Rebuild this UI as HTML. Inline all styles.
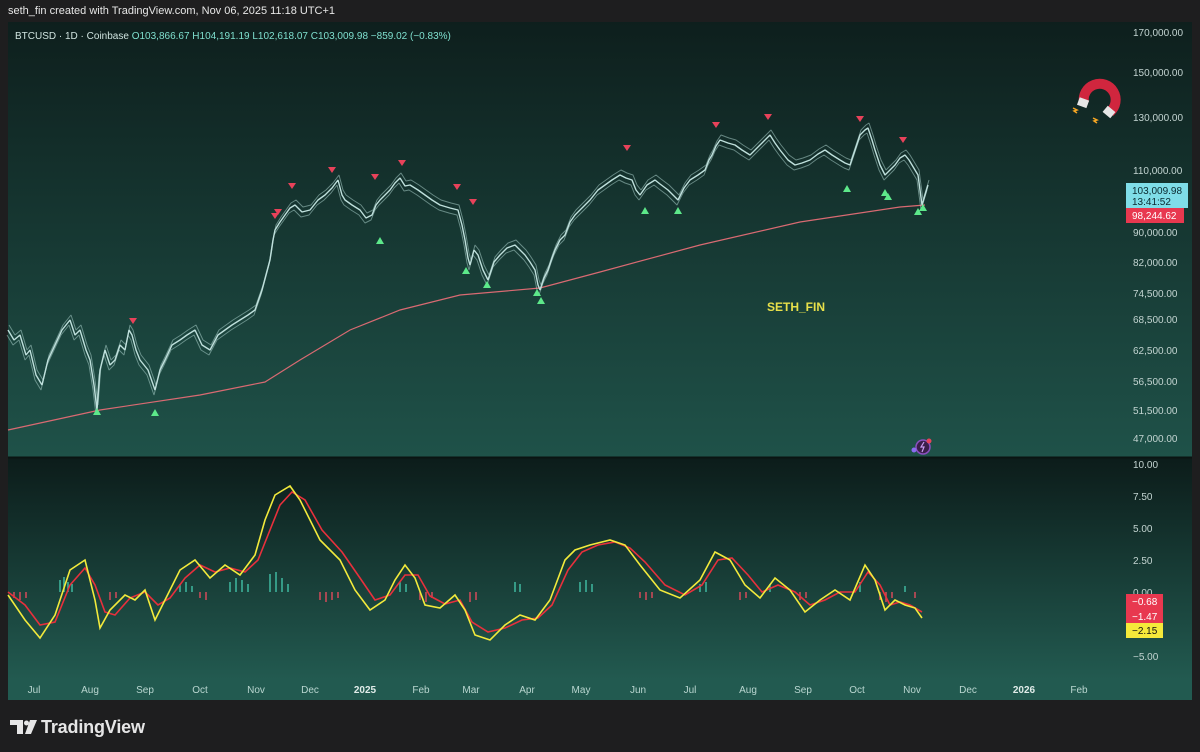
<!DOCTYPE html>
<html><head><meta charset="utf-8"><style>
html,body{margin:0;padding:0;background:#1e1e1f;width:1200px;height:752px;overflow:hidden;font-family:"Liberation Sans",sans-serif}
.t{position:absolute;left:8px;top:5px;color:#e6e6e6;font-size:11px}
</style></head><body>
<div class="t">seth_fin created with TradingView.com, Nov 06, 2025 11:18 UTC+1</div>
<svg width="1200" height="752" style="position:absolute;left:0;top:0" font-family="Liberation Sans, sans-serif">
<defs>
<linearGradient id="g1" x1="0" y1="0" x2="0" y2="1"><stop offset="0" stop-color="#0e1f1d"/><stop offset="1" stop-color="#1f5249"/></linearGradient>
<linearGradient id="g2" x1="0" y1="0" x2="0" y2="1"><stop offset="0" stop-color="#0c1c1a"/><stop offset="1" stop-color="#225a50"/></linearGradient>
<polyline id="pr" fill="none" stroke-linejoin="bevel" points="8,330 14,340 20,335 26,355 30,350 36,375 42,385 48,360 55,345 62,330 70,320 75,335 80,330 86,350 90,360 94,385 97,410 100,370 105,350 110,365 115,360 120,345 125,350 129,330 132,335 136,350 140,360 148,370 155,390 160,370 165,360 172,345 180,340 187,335 195,330 202,345 210,350 218,335 225,330 232,325 240,320 248,315 255,310 262,290 266,275 270,260 273,240 275,230 280,222 285,215 290,208 295,205 302,212 310,210 318,200 325,195 332,188 338,180 342,195 345,200 352,205 360,210 366,218 372,215 376,205 380,200 385,195 390,190 395,183 400,178 405,186 410,185 418,190 425,195 432,200 440,205 450,208 458,210 462,225 465,240 468,258 470,265 474,250 478,255 483,270 488,280 494,262 500,255 507,248 515,245 520,250 525,255 530,262 535,270 538,285 540,290 544,278 548,270 552,258 555,250 560,240 565,235 570,222 575,215 582,208 590,200 598,190 605,185 612,180 620,175 626,178 632,180 636,190 640,195 647,185 655,180 660,184 668,190 673,195 678,200 684,188 690,180 698,175 705,170 709,160 712,155 716,146 720,140 728,143 735,145 742,150 750,155 755,150 760,145 765,140 770,135 775,143 780,150 788,160 795,165 802,163 810,160 818,154 825,150 832,155 840,160 845,163 850,165 855,150 860,135 865,130 868,128 872,140 875,150 880,165 885,175 890,170 895,165 900,158 905,155 909,160 912,165 915,170 918,175 920,190 922,205 925,195 928,185"/>
</defs>
<rect x="8" y="22" width="1184" height="436" fill="url(#g1)"/>
<rect x="8" y="458" width="1184" height="222" fill="url(#g2)"/>
<rect x="8" y="678" width="1184" height="22" fill="#225a50"/>
<line x1="8" y1="457.5" x2="1192" y2="457.5" stroke="#0a1412" stroke-width="2"/>
<text x="15" y="39" font-size="10" fill="#cfe3df">BTCUSD · 1D · Coinbase <tspan fill="#7fe0cf">O103,866.67 H104,191.19 L102,618.07 C103,009.98 −859.02 (−0.83%)</tspan></text>
<polyline fill="none" stroke="#d96a72" stroke-width="1.2" points="8,430 100,410 200,395 265,382 300,360 350,330 400,310 460,295 540,288 600,272 700,245 800,222 900,207 925,205"/>
<use href="#pr" transform="translate(1,-5)" stroke="#a9cfca" stroke-width="1" opacity="0.55"/>
<use href="#pr" transform="translate(-1,5)" stroke="#a9cfca" stroke-width="1" opacity="0.55"/>
<use href="#pr" stroke="#bfe0dc" stroke-width="1.4"/>
<g fill="#5de88a">
<path d="M93,415 l4,-7 l4,7z"/><path d="M151,416 l4,-7 l4,7z"/><path d="M376,244 l4,-7 l4,7z"/><path d="M462,274 l4,-7 l4,7z"/><path d="M483,288 l4,-7 l4,7z"/><path d="M533,296 l4,-7 l4,7z"/><path d="M537,304 l4,-7 l4,7z"/><path d="M641,214 l4,-7 l4,7z"/><path d="M674,214 l4,-7 l4,7z"/><path d="M843,192 l4,-7 l4,7z"/><path d="M881,196 l4,-7 l4,7z"/><path d="M884,200 l4,-7 l4,7z"/><path d="M914,215 l4,-7 l4,7z"/><path d="M919,211 l4,-7 l4,7z"/>
</g>
<g fill="#e8425a">
<path d="M129,318 l8,0 l-4,6z"/><path d="M271,213 l8,0 l-4,6z"/><path d="M274,209 l8,0 l-4,6z"/><path d="M288,183 l8,0 l-4,6z"/><path d="M328,167 l8,0 l-4,6z"/><path d="M371,174 l8,0 l-4,6z"/><path d="M398,160 l8,0 l-4,6z"/><path d="M453,184 l8,0 l-4,6z"/><path d="M469,199 l8,0 l-4,6z"/><path d="M623,145 l8,0 l-4,6z"/><path d="M712,122 l8,0 l-4,6z"/><path d="M764,114 l8,0 l-4,6z"/><path d="M856,116 l8,0 l-4,6z"/><path d="M899,137 l8,0 l-4,6z"/>
</g>
<text x="767" y="311" font-size="12" font-weight="bold" fill="#e8e04a">SETH_FIN</text>
<g transform="translate(1099,96)">
<path d="M-15,7 A16,16 0 1 1 11,16" fill="none" stroke="#d0263e" stroke-width="10"/>
<rect x="-21" y="3" width="10" height="8" fill="#e6e6e6" transform="rotate(20 -15 7)"/>
<rect x="5" y="12" width="10" height="8" fill="#e6e6e6" transform="rotate(40 10 16)"/>
<path d="M-26,12 l4,2 l-3,1 l3,2" stroke="#f5a623" stroke-width="1.5" fill="none"/>
<path d="M-6,22 l4,2 l-3,1 l3,2" stroke="#f5a623" stroke-width="1.5" fill="none"/>
</g>
<circle cx="923" cy="447" r="7" fill="#3a1e4a" stroke="#8a4fc0" stroke-width="1.5"/>
<path d="M924,442 l-3,5 h3 l-2,5" stroke="#c89cf0" stroke-width="1.2" fill="none"/>
<circle cx="929" cy="441" r="2.5" fill="#e8425a"/>
<circle cx="914" cy="450" r="2.5" fill="#8a6cf0"/>
<g font-size="10" fill="#c3d4d1">
<text x="1133" y="36">170,000.00</text><text x="1133" y="76">150,000.00</text><text x="1133" y="121">130,000.00</text><text x="1133" y="174">110,000.00</text><text x="1133" y="236">90,000.00</text><text x="1133" y="266">82,000.00</text><text x="1133" y="297">74,500.00</text><text x="1133" y="323">68,500.00</text><text x="1133" y="354">62,500.00</text><text x="1133" y="385">56,500.00</text><text x="1133" y="414">51,500.00</text><text x="1133" y="442">47,000.00</text>
<text x="1133" y="468">10.00</text><text x="1133" y="500">7.50</text><text x="1133" y="532">5.00</text><text x="1133" y="564">2.50</text><text x="1133" y="596">0.00</text><text x="1133" y="660">−5.00</text>
</g>
<rect x="1126" y="183" width="62" height="25" fill="#7fdde8"/>
<text x="1132" y="194" font-size="10" fill="#0a2a30">103,009.98</text><text x="1132" y="205" font-size="10" fill="#0a2a30">13:41:52</text>
<rect x="1126" y="208" width="58" height="15" fill="#e8384f"/><text x="1132" y="219" font-size="10" fill="#fff">98,244.62</text>
<rect x="1126" y="594" width="37" height="15" fill="#e8384f"/><text x="1132" y="605" font-size="10" fill="#fff">−0.68</text>
<rect x="1126" y="609" width="37" height="15" fill="#e8384f"/><text x="1132" y="620" font-size="10" fill="#fff">−1.47</text>
<rect x="1126" y="623" width="37" height="15" fill="#f5e93a"/><text x="1132" y="634" font-size="10" fill="#111">−2.15</text>
<g stroke-width="1.5">
<path stroke="#3fb8a0" d="M60,592v-12M64,592v-15M68,592v-10M72,592v-8M180,592v-8M186,592v-10M192,592v-6M230,592v-10M236,592v-14M242,592v-12M248,592v-8M270,592v-18M276,592v-20M282,592v-14M288,592v-8M400,592v-10M406,592v-8M515,592v-10M520,592v-8M580,592v-10M586,592v-12M592,592v-8M700,592v-8M706,592v-10M770,592v-8M860,592v-10M905,592v-6"/>
<path stroke="#d44a5a" d="M14,592v6M20,592v8M26,592v6M110,592v8M116,592v6M200,592v6M206,592v8M320,592v8M326,592v10M332,592v8M338,592v6M420,592v8M426,592v10M432,592v6M470,592v10M476,592v8M640,592v6M646,592v8M652,592v6M740,592v8M746,592v6M800,592v8M806,592v6M880,592v8M886,592v10M892,592v6M915,592v6"/>
</g>
<polyline fill="none" stroke="#e8303c" stroke-width="1.6" points="8,592 25,605 40,625 55,622 70,585 85,568 95,585 105,612 115,615 130,598 145,592 158,605 170,598 185,578 200,565 215,572 230,568 245,572 258,560 268,535 280,505 292,492 305,500 322,530 342,552 360,578 375,600 390,595 405,575 418,575 430,596 445,604 460,600 472,622 488,632 505,628 522,620 538,618 552,605 568,570 582,552 598,545 615,542 630,548 645,562 665,585 685,595 702,585 718,560 732,558 748,575 762,592 778,585 795,592 810,605 825,600 840,592 855,592 868,572 880,585 890,605 900,602 910,605 922,612"/>
<polyline fill="none" stroke="#f2ea3c" stroke-width="1.6" points="8,595 25,620 40,638 55,615 70,570 85,560 95,600 100,628 110,610 125,595 135,600 145,590 155,620 165,600 180,570 195,560 210,578 225,565 240,575 255,555 265,520 275,495 290,486 300,500 320,540 340,560 355,590 370,610 385,600 395,580 405,565 415,578 425,605 440,608 455,595 465,610 475,635 490,640 505,625 520,615 535,620 550,600 565,560 575,550 590,545 610,540 625,545 640,565 660,590 680,598 700,580 715,552 730,560 745,585 760,598 775,578 790,590 805,612 820,600 835,590 850,600 865,565 875,580 885,610 895,600 905,605 915,608 922,618"/>
<g font-size="10" fill="#b9d6d0" text-anchor="middle">
<text x="34" y="693">Jul</text><text x="90" y="693">Aug</text><text x="145" y="693">Sep</text><text x="200" y="693">Oct</text><text x="256" y="693">Nov</text><text x="310" y="693">Dec</text><text x="365" y="693" font-weight="bold" fill="#e0ece9">2025</text><text x="421" y="693">Feb</text><text x="471" y="693">Mar</text><text x="527" y="693">Apr</text><text x="581" y="693">May</text><text x="638" y="693">Jun</text><text x="690" y="693">Jul</text><text x="748" y="693">Aug</text><text x="803" y="693">Sep</text><text x="857" y="693">Oct</text><text x="912" y="693">Nov</text><text x="968" y="693">Dec</text><text x="1024" y="693" font-weight="bold" fill="#e0ece9">2026</text><text x="1079" y="693">Feb</text>
</g>
<g fill="#e6e6e6">
<path d="M10,720h13v14h-6v-9h-7z"/><circle cx="26.5" cy="723" r="2.5"/><path d="M30,720h7l-6,14h-6z"/>
</g>
<text x="41" y="733" font-size="18" font-weight="bold" fill="#e6e6e6" textLength="104">TradingView</text>
</svg>
</body></html>
